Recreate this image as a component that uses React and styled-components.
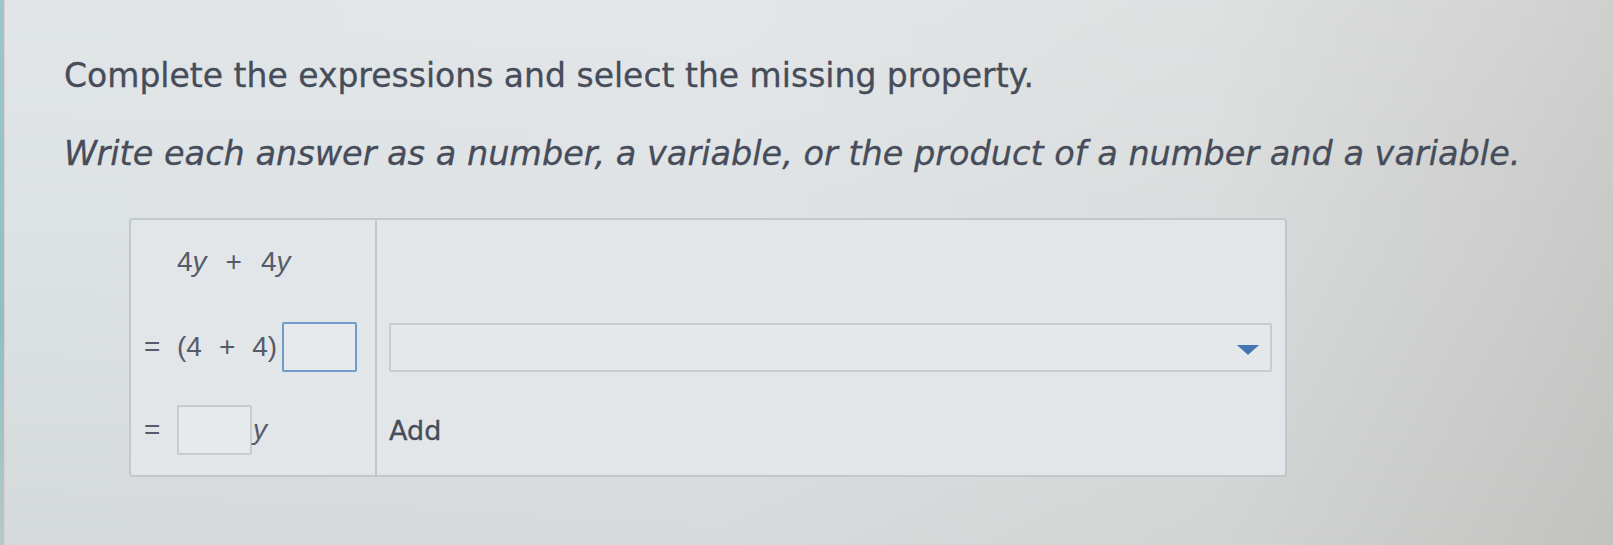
import styled, { createGlobalStyle } from "styled-components";

const GlobalStyle = createGlobalStyle`
  *, *::before, *::after {
    box-sizing: border-box;
  }
  html, body {
    margin: 0;
    height: 100%;
  }
  body {
    background:
      linear-gradient(180deg, rgba(255,255,255,0.12) 0%, rgba(0,0,0,0) 40%, rgba(60,60,40,0.05) 100%),
      linear-gradient(90deg, #dde2e4 0%, #dfe3e5 45%, #dadddd 75%, #c9cac8 100%);
    font-family: "DejaVu Sans", Verdana, sans-serif;
  }
`;

const Page = styled.div`
  display: flex;
  min-height: 545px;
`;

const EdgeStrip = styled.div`
  width: 5px;
  flex-shrink: 0;
  background: linear-gradient(180deg, #9cc6cc 0%, #8fbfc3 60%, #b4c9c6 100%);
  border-right: 1px solid #d9cfd4;
`;

const Content = styled.div`
  padding: 56px 0 0 59px;
  flex: 1;
`;

const Title = styled.p`
  margin: 0;
  font-size: 33px;
  line-height: 40px;
  color: #474c5a;
  -webkit-text-stroke: 0.3px #474c5a;
`;

const Instruction = styled(Title)`
  margin-top: 38px;
  font-size: 33.5px;
  font-style: italic;
`;

const Table = styled.div`
  margin: 44px 0 0 65px;
  width: 1158px;
  display: grid;
  grid-template-columns: 246px 1fr;
  grid-template-rows: 84px 86px 85px;
  border: 2px solid #c1c8cb;
  border-radius: 4px;
  background: #e2e6e8;
`;

const LeftCell = styled.div`
  display: flex;
  align-items: center;
  padding: 0 0 ${(p) => p.$lift || 0}px 13px;
  border-right: 2px solid #c1c8cb;
  font-family: "Liberation Sans", Arial, sans-serif;
  font-size: 28px;
  color: #555b69;
`;

const RightCell = styled.div`
  display: flex;
  align-items: center;
  padding: 0 13px ${(p) => p.$lift || 0}px 12px;
`;

const Eq = styled.span`
  width: 33px;
  flex-shrink: 0;
`;

const Op = styled.span`
  margin: 0 ${(p) => p.$gap || 10}px;
`;

const Var = styled.i`
  font-style: italic;
`;

const AnswerBox = styled.span`
  display: inline-block;
  width: 75px;
  height: 50px;
  margin-left: ${(p) => p.$left || 0}px;
  margin-right: 1px;
  border: 2px solid ${(p) => (p.$focused ? "#6e9ccb" : "#c6ccd0")};
  border-radius: 2px;
  background: #e6eaec;
`;

const Select = styled.div`
  flex: 1;
  height: 49px;
  display: flex;
  align-items: center;
  justify-content: flex-end;
  padding-right: 10px;
  border: 2px solid #c6cdd0;
  border-radius: 2px;
  background: #e4e8ea;
`;

const Option = styled.span`
  font-size: 27px;
  color: #474c5a;
  -webkit-text-stroke: 0.3px #474c5a;
`;

function Caret() {
  return (
    <svg width="24" height="12" viewBox="0 0 24 12" style={{ marginTop: 6 }}>
      <path d="M1 1 L23 1 L12 11 Z" fill="#4275b1" />
    </svg>
  );
}

export default function App() {
  return (
    <>
      <GlobalStyle />
      <Page>
        <EdgeStrip />
        <Content>
          <Title>Complete the expressions and select the missing property.</Title>
          <Instruction>
            Write each answer as a number, a variable, or the product of a number and a variable.
          </Instruction>
          <Table>
            <LeftCell>
              <Eq />
              4<Var>y</Var>
              <Op $gap={19}>+</Op>
              4<Var>y</Var>
            </LeftCell>
            <RightCell />
            <LeftCell>
              <Eq>=</Eq>
              (4<Op $gap={17}>+</Op>4)
              <AnswerBox $focused $left={5} />
            </LeftCell>
            <RightCell>
              <Select>
                <Caret />
              </Select>
            </RightCell>
            <LeftCell $lift={5}>
              <Eq>=</Eq>
              <AnswerBox />
              <Var>y</Var>
            </LeftCell>
            <RightCell $lift={5}>
              <Option>Add</Option>
            </RightCell>
          </Table>
        </Content>
      </Page>
    </>
  );
}
